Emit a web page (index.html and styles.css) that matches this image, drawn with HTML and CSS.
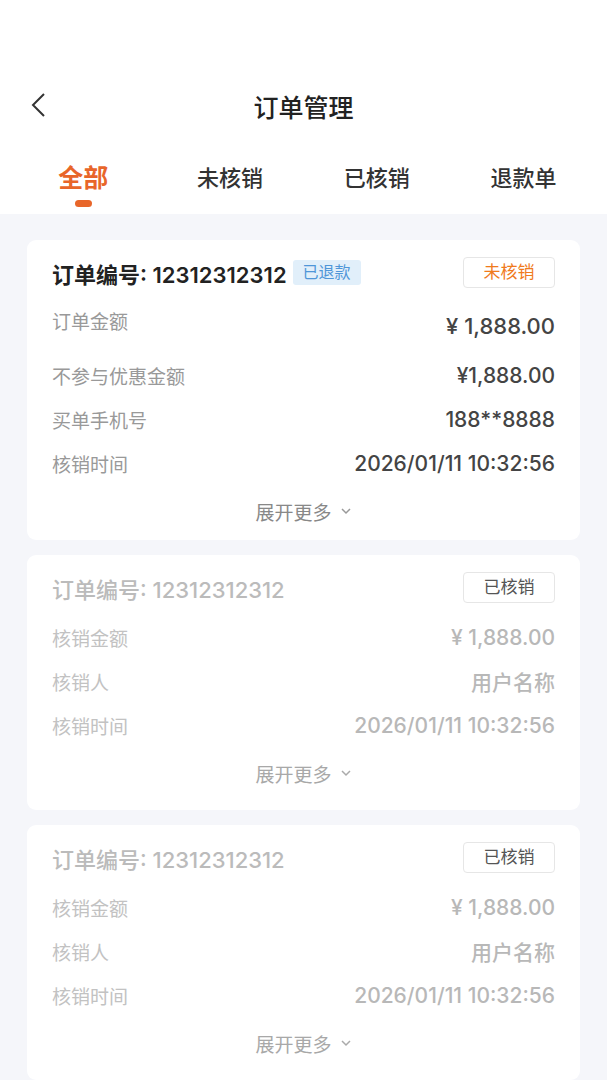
FILE: index.html
```html
<!DOCTYPE html>
<html>
<head>
<meta charset="utf-8">
<title>订单管理</title>
<link rel="stylesheet" href="styles.css">
</head>
<body>
<div class="page">
	<div class="navBar">
		<span class="backBtn">
			<svg width="16" height="26" viewBox="0 0 16 26"><path d="M14 2 L3 13 L14 24" fill="none" stroke="#333" stroke-width="2"/></svg>
		</span>
		<span class="navTitle">订单管理</span>
	</div>
	<div class="tabBar">
		<div class="tab tab_on"><span>全部</span><i class="tabLine"></i></div>
		<div class="tab"><span>未核销</span></div>
		<div class="tab"><span>已核销</span></div>
		<div class="tab"><span>退款单</span></div>
	</div>

	<div class="orderList">
		<div class="orderCard cardActive">
			<div class="cardHead">
				<span class="orderNo">订单编号: 12312312312</span>
				<span class="refundTag">已退款</span>
				<span class="statusBtn statusOrange">未核销</span>
			</div>
			<div class="infoRow rowBig">
				<span class="infoLabel">订单金额</span>
				<span class="infoValue valueBig">¥ 1,888.00</span>
			</div>
			<div class="infoRow">
				<span class="infoLabel">不参与优惠金额</span>
				<span class="infoValue">¥1,888.00</span>
			</div>
			<div class="infoRow">
				<span class="infoLabel">买单手机号</span>
				<span class="infoValue">188**8888</span>
			</div>
			<div class="infoRow">
				<span class="infoLabel">核销时间</span>
				<span class="infoValue">2026/01/11 10:32:56</span>
			</div>
			<div class="moreRow">展开更多
				<svg width="12" height="8" viewBox="0 0 12 8"><path d="M2 2 L6 6 L10 2" fill="none" stroke="#999" stroke-width="1.5"/></svg>
			</div>
		</div>

		<div class="orderCard cardDone">
			<div class="cardHead">
				<span class="orderNo">订单编号: 12312312312</span>
				<span class="statusBtn">已核销</span>
			</div>
			<div class="infoRow">
				<span class="infoLabel">核销金额</span>
				<span class="infoValue">¥ 1,888.00</span>
			</div>
			<div class="infoRow">
				<span class="infoLabel">核销人</span>
				<span class="infoValue">用户名称</span>
			</div>
			<div class="infoRow">
				<span class="infoLabel">核销时间</span>
				<span class="infoValue">2026/01/11 10:32:56</span>
			</div>
			<div class="moreRow">展开更多
				<svg width="12" height="8" viewBox="0 0 12 8"><path d="M2 2 L6 6 L10 2" fill="none" stroke="#aaa" stroke-width="1.5"/></svg>
			</div>
		</div>

		<div class="orderCard cardDone">
			<div class="cardHead">
				<span class="orderNo">订单编号: 12312312312</span>
				<span class="statusBtn">已核销</span>
			</div>
			<div class="infoRow">
				<span class="infoLabel">核销金额</span>
				<span class="infoValue">¥ 1,888.00</span>
			</div>
			<div class="infoRow">
				<span class="infoLabel">核销人</span>
				<span class="infoValue">用户名称</span>
			</div>
			<div class="infoRow">
				<span class="infoLabel">核销时间</span>
				<span class="infoValue">2026/01/11 10:32:56</span>
			</div>
			<div class="moreRow">展开更多
				<svg width="12" height="8" viewBox="0 0 12 8"><path d="M2 2 L6 6 L10 2" fill="none" stroke="#aaa" stroke-width="1.5"/></svg>
			</div>
		</div>
	</div>
</div>
</body>
</html>
```

FILE: styles.css
```css
body{margin:0;background:#f5f6fa;font-family:"Inter","Noto Sans CJK SC",sans-serif;color:#333;}
.page{background:#f5f6fa;min-height:1080px;}

.navBar
{
	background:#fff;
	padding-top:74px;
	height:64px;
	display:flex;
	align-items:center;
	justify-content:center;
	position:relative;
}
.backBtn{position:absolute;left:30px;top:92px;height:26px;}
.navTitle{font-size:25px;font-weight:500;color:#222;}

.tabBar
{
	background:#fff;
	display:grid;
	grid-template-columns:repeat(4,1fr);
	padding:0 10px;
	height:76px;
}
.tab
{
	display:flex;
	flex-direction:column;
	align-items:center;
	padding-top:25px;
	font-size:22px;
	font-weight:500;
	color:#333;
	line-height:30px;
}
.tab_on{font-size:25px;font-weight:700;color:#e8662a;}
.tabLine
{
	display:block;
	width:17px;
	height:7px;
	border-radius:4px;
	background:#e8662a;
	margin-top:7px;
}

.orderList{padding:26px 27px 0;display:flex;flex-direction:column;gap:15px;}
.orderCard
{
	background:#fff;
	border-radius:9px;
	padding:17px 25px 15px;
}
.cardActive{padding-bottom:7px;}

.cardHead{display:flex;align-items:center;height:31px;margin-bottom:12px;}
.orderNo{font-size:22px;font-weight:600;color:#222;}
.refundTag
{
	margin-left:6px;
	background:#e1effa;
	color:#4f96d8;
	font-size:16px;
	line-height:25px;
	padding:0 10px;
	border-radius:3px;
}
.statusBtn
{
	margin-left:auto;
	width:90px;
	height:29px;
	line-height:29px;
	text-align:center;
	border:1px solid #e6e6e6;
	border-radius:4px;
	font-size:17px;
	color:#555;
}
.statusOrange{color:#f07a1c;}

.infoRow{display:flex;justify-content:space-between;align-items:center;height:44px;}
.rowBig{height:53px;align-items:flex-start;}
.rowBig .infoLabel{line-height:46px;}
.infoLabel{font-size:19px;color:#999;}
.infoValue{font-size:21px;font-weight:500;color:#444;}
.valueBig{font-size:22px;line-height:53px;}

.moreRow
{
	margin-top:4px;
	height:44px;
	display:flex;
	align-items:center;
	justify-content:center;
	gap:8px;
	font-size:19px;
	color:#888;
}

.cardDone .orderNo{color:#bbb;font-weight:500;}
.cardDone .infoLabel{color:#c2c2c2;}
.cardDone .infoValue{color:#b8b8b8;}
.cardDone .moreRow{color:#a8a8a8;}
```
